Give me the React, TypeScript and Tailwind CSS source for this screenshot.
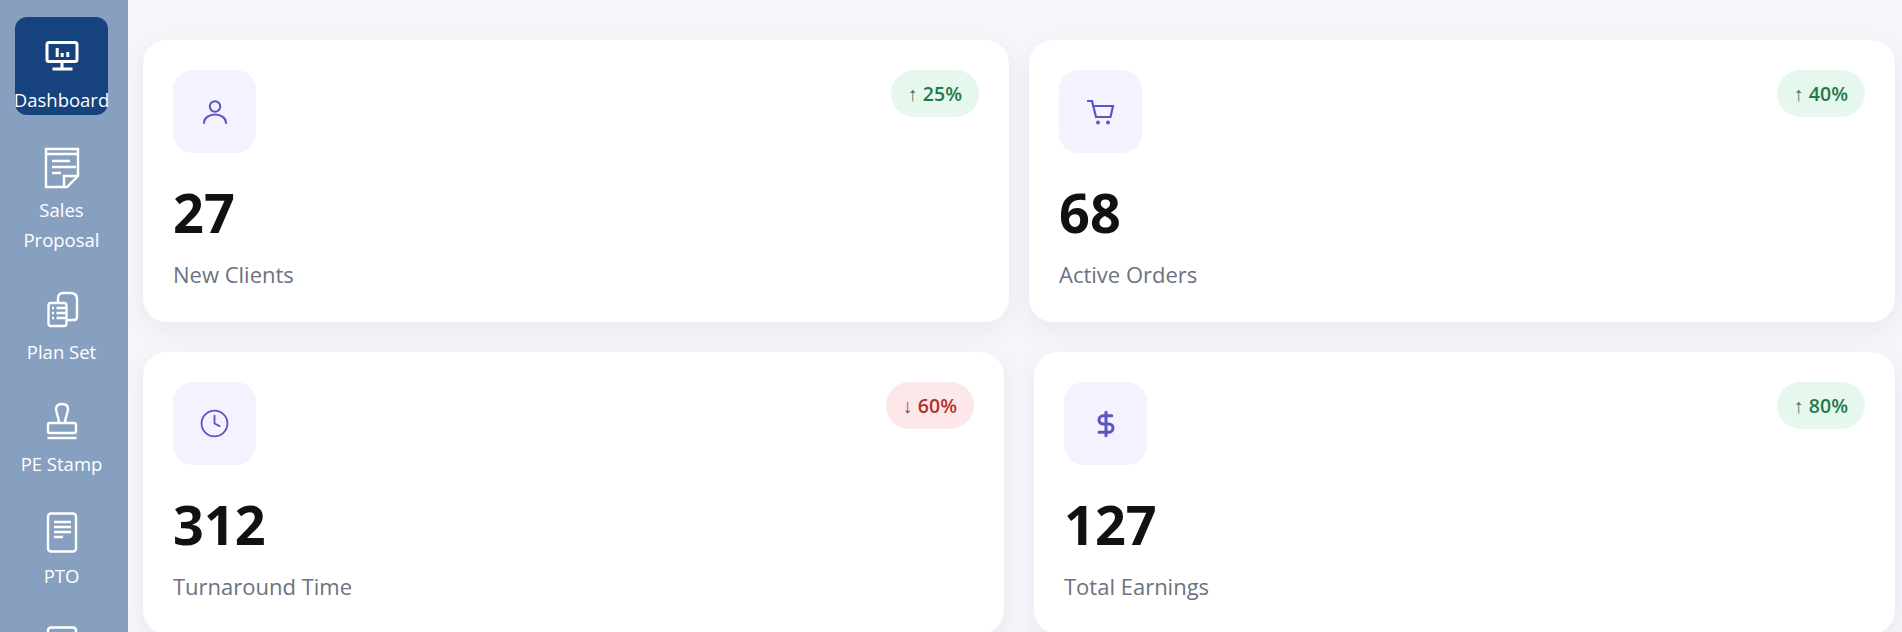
import React from 'react';
import { Clock, DollarSign } from 'lucide-react';

const navIcon = 'w-[44px] h-[44px] text-white shrink-0';

const DashboardIcon = () => (
  <svg viewBox="0 0 44 44" className={navIcon} fill="none" stroke="currentColor" strokeWidth="3">
    <rect x="7" y="9.500" width="30" height="19" rx="2" />
    <path d="M22 30v5M12.500 36h20" />
    <path d="M17.200 15v9M22.200 20v4M27.800 19v5" />
  </svg>
);

const ProposalIcon = () => (
  <svg viewBox="0 0 44 44" className={navIcon} fill="none" stroke="currentColor" strokeWidth="2.4">
    <path d="M6 4h32v27L27 42H6z" />
    <path d="M6 9h32M12 16h18M12 22h24M12 28h9M24 42V31h14" />
  </svg>
);

const PlanSetIcon = () => (
  <svg viewBox="0 0 44 44" className={navIcon} fill="none" stroke="currentColor" strokeWidth="2.4">
    <rect x="8.500" y="16" width="18" height="23" rx="2.500" />
    <path d="M18 16v-5c0-3 2-5 5-5h7c4 0 7 2 7 6v18c0 2-1 3-3 3h-7" />
    <path d="M12 21h2M16.500 21h9M12 26h2M16.500 26h9M12 31h2M16.500 31h9" />
  </svg>
);

const StampIcon = () => (
  <svg viewBox="0 0 44 44" className={navIcon} fill="none" stroke="currentColor" strokeWidth="2.4">
    <path d="M19 24c0-6-3-10-3-14 0-4 3-5 6-5s6 1 6 5c0 4-3 8-3 14" />
    <rect x="8" y="24" width="28" height="10" rx="2" />
    <path d="M7.500 39h29" />
  </svg>
);

const PtoIcon = () => (
  <svg viewBox="0 0 44 44" className={navIcon} fill="none" stroke="currentColor" strokeWidth="2.4">
    <rect x="8" y="2.500" width="28" height="38" rx="3" />
    <path d="M14 11h17M14 16h17M14 21h17M14 26h9" />
  </svg>
);

const NavItem = ({ icon, label, active, className }: { icon: React.ReactNode; label: React.ReactNode; active?: boolean; className: string }) => (
  <div className={`flex flex-col items-center text-center text-white text-[18.500px] leading-[30px] ${active ? 'bg-[#16437e] rounded-[12px] w-[93px] gap-[8px]' : 'w-full gap-[6px]'} ${className}`}>
    {icon}
    <span className="whitespace-nowrap">{label}</span>
  </div>
);

const Sidebar = () => (
  <aside className="w-[128px] shrink-0 h-full bg-[#87a0c0] flex flex-col items-center overflow-hidden pt-[17px] pr-[5px]">
    <NavItem active className="h-[98px] pt-[16px] shrink-0" icon={<DashboardIcon />} label="Dashboard" />
    <NavItem className="mt-[30px]" icon={<ProposalIcon />} label={<>Sales<br />Proposal</>} />
    <NavItem className="mt-[32px]" icon={<PlanSetIcon />} label="Plan Set" />
    <NavItem className="mt-[32px]" icon={<StampIcon />} label="PE Stamp" />
    <NavItem className="mt-[32px]" icon={<PtoIcon />} label="PTO" />
    <NavItem className="mt-[34px]" icon={<PtoIcon />} label="" />
  </aside>
);

const UserIcon = () => (
  <svg viewBox="0 0 28 28" className="w-[28px] h-[28px]" fill="none" stroke="currentColor" strokeWidth="2" strokeLinecap="round">
    <circle cx="14" cy="8.500" r="5.200" />
    <path d="M3 25c0-5 5-8.500 11-8.500S25 20 25 25" />
  </svg>
);

const CartIcon = () => (
  <svg viewBox="0 0 28 28" className="w-[28px] h-[28px]" fill="none" stroke="currentColor" strokeWidth="2.200">
    <path d="M0 3h5l4 16h14.500L26 8H6.500" />
    <circle cx="11" cy="24.500" r="1.900" fill="currentColor" stroke="none" />
    <circle cx="21" cy="24.500" r="1.900" fill="currentColor" stroke="none" />
  </svg>
);

const StatCard = ({ icon, value, label, change, up, className }: { icon: React.ReactNode; value: string; label: string; change: string; up: boolean; className: string }) => (
  <div className={`h-[282px] shrink-0 bg-white rounded-[24px] p-[30px] shadow-[0_8px_24px_rgba(30,40,90,0.06)] ${className}`}>
    <div className="flex items-start justify-between">
      <div className="w-[83px] h-[83px] rounded-[20px] bg-[#f4f2ff] text-[#5b55c4] flex items-center justify-center">
        {icon}
      </div>
      <div className={`h-[47px] px-[17px] rounded-full flex items-center text-[19.500px] font-semibold ${up ? 'bg-[#e6f7ee] text-[#1e7a4c]' : 'bg-[#fce8e8] text-[#b3322c]'}`}>
        {up ? '↑' : '↓'} {change}
      </div>
    </div>
    <div className="mt-[24px] text-[54px] leading-[70px] font-bold text-[#111111]">{value}</div>
    <div className="mt-[12px] text-[22px] leading-[30px] text-[#6b7280]">{label}</div>
  </div>
);

export default function App() {
  return (
    <div className="h-screen w-full flex overflow-hidden bg-[#f5f6fa] font-['Open_Sans','Noto_Sans',sans-serif]">
      <Sidebar />
      <main className="flex-1 min-w-0 pl-[15px] pt-[40px] flex flex-col gap-[30px]">
        <div className="flex gap-[20px]">
          <StatCard className="w-[866px]" icon={<UserIcon />} value="27" label="New Clients" change="25%" up />
          <StatCard className="w-[866px]" icon={<CartIcon />} value="68" label="Active Orders" change="40%" up />
        </div>
        <div className="flex gap-[30px]">
          <StatCard className="w-[861px]" icon={<Clock size={31} strokeWidth={1.4} />} value="312" label="Turnaround Time" change="60%" up={false} />
          <StatCard className="w-[861px]" icon={<DollarSign size={28} strokeWidth={2.6} />} value="127" label="Total Earnings" change="80%" up />
        </div>
      </main>
    </div>
  );
}
